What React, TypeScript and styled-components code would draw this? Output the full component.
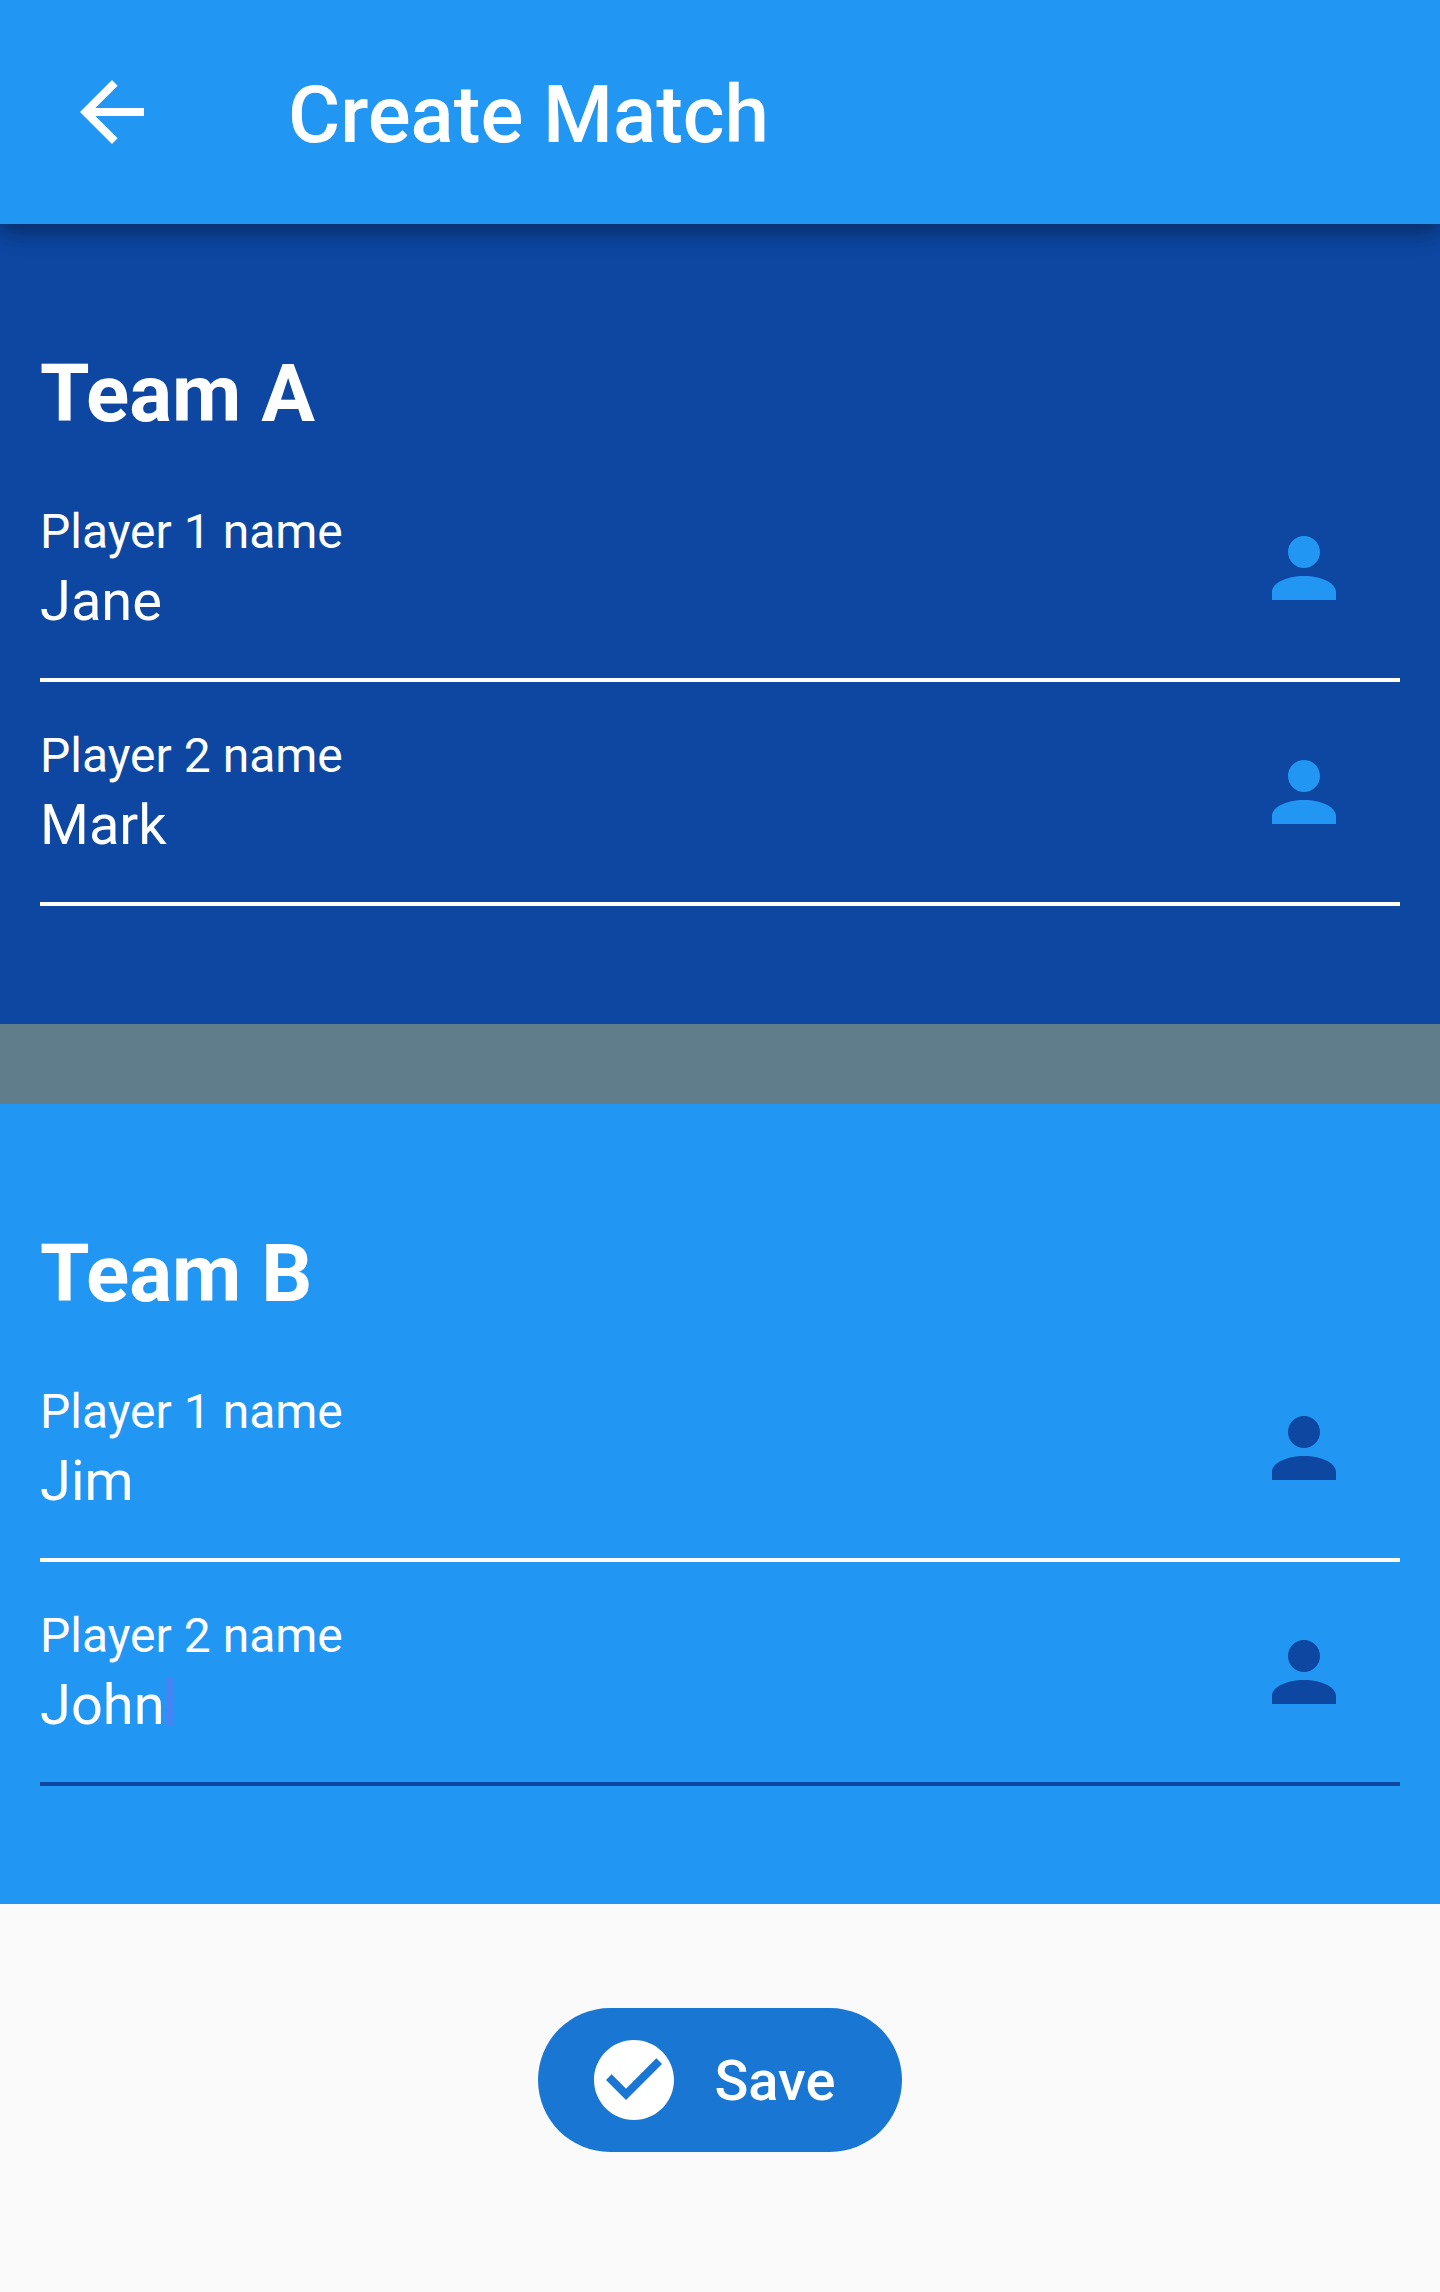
import React, { useState } from 'react';
import styled, { createGlobalStyle } from 'styled-components';

const blue = '#2196f3';
const navy = '#0d47a1';

const GlobalStyle = createGlobalStyle`
  *, *::before, *::after { box-sizing: border-box; }
  body {
    margin: 0;
    background: #fafafa;
    font-family: Roboto, "Liberation Sans", sans-serif;
  }
`;

const Screen = styled.div`
  display: flex;
  flex-direction: column;
  min-height: 100vh;
`;

const AppBar = styled.header`
  position: relative;
  z-index: 1;
  display: flex;
  align-items: center;
  gap: 96px;
  min-height: 224px;
  padding: 0 32px;
  background: ${blue};
  color: #fff;
  box-shadow:
    0 8px 16px -2px rgba(0, 0, 0, 0.2),
    0 12px 20px 0 rgba(0, 0, 0, 0.12),
    0 4px 32px 0 rgba(0, 0, 0, 0.1);
`;

const BackButton = styled.button`
  display: flex;
  margin: 0;
  padding: 0 32px;
  border: 0;
  background: none;
  color: inherit;
  cursor: pointer;
`;

const Title = styled.h1`
  margin: 0;
  padding-top: 6px;
  font-size: 80px;
  font-weight: 500;
  line-height: 96px;
`;

const Icon = styled.svg`
  display: block;
  flex: none;
  width: 96px;
  height: 96px;
  fill: currentColor;
`;

const Form = styled.form`
  display: flex;
  flex-direction: column;
`;

const Team = styled.section<{ $background: string; $accent: string }>`
  --accent: ${(p) => p.$accent};
  padding: 122px 40px 118px;
  background: ${(p) => p.$background};
  color: #fff;
`;

const TeamName = styled.h2`
  margin: 0 0 16px;
  font-size: 80px;
  font-weight: 700;
  line-height: 96px;
`;

const Field = styled.div<{ $active: boolean }>`
  display: flex;
  align-items: center;
  padding-right: 48px;
  border-bottom: 4px solid ${(p) => (p.$active ? 'var(--accent)' : '#fff')};

  svg { color: var(--accent); }
`;

const FieldText = styled.div`
  flex: 1;
  min-width: 0;
  padding: 46px 0 44px;
`;

const Label = styled.label`
  display: block;
  margin-bottom: 8px;
  font-size: 48px;
  line-height: 56px;
`;

const Entry = styled.div`
  display: flex;
  height: 66px;
`;

const Input = styled.input<{ $fit: boolean }>`
  ${(p) => (p.$fit ? 'field-sizing: content;' : 'width: 100%;')}
  height: 66px;
  margin: 0;
  padding: 0;
  border: 0;
  outline: 0;
  background: none;
  color: inherit;
  caret-color: transparent;
  font: inherit;
  font-size: 56px;
  line-height: 66px;
`;

const Caret = styled.span`
  width: 8px;
  height: 48px;
  margin-top: 6px;
  background: #4285f4;
`;

const Divider = styled.div`
  height: 80px;
  background: #607d8b;
`;

const Actions = styled.div`
  display: flex;
  justify-content: center;
  padding: 104px 40px;
`;

const SaveButton = styled.button`
  display: flex;
  align-items: center;
  gap: 32px;
  margin: 0;
  padding: 24px 66px 24px 48px;
  border: 0;
  border-radius: 72px;
  background: #1976d2;
  color: #fff;
  font: inherit;
  font-size: 56px;
  font-weight: 500;
  line-height: 68px;
  cursor: pointer;
`;

const ArrowBackIcon = () => (
  <Icon viewBox="0 0 24 24" aria-hidden="true">
    <path d="M20 11H7.83l5.59-5.59L12 4l-8 8 8 8 1.41-1.41L7.83 13H20v-2z" />
  </Icon>
);

const PersonIcon = () => (
  <Icon viewBox="0 0 24 24" aria-hidden="true">
    <path d="M12 12c2.21 0 4-1.79 4-4s-1.79-4-4-4-4 1.79-4 4 1.79 4 4 4zm0 2c-4.42 0-8 1.79-8 4v2h16v-2c0-2.21-3.58-4-8-4z" />
  </Icon>
);

const CheckCircleIcon = () => (
  <Icon viewBox="0 0 24 24" aria-hidden="true">
    <path d="M12 2C6.48 2 2 6.48 2 12s4.48 10 10 10 10-4.48 10-10S17.52 2 12 2zm-2 15l-5-5 1.41-1.41L10 14.17l7.59-7.59L19 8l-9 9z" />
  </Icon>
);

const SaveLabel = styled.span`
  padding-top: 2px;
`;

type PlayerFieldProps = { id: string; label: string; initial: string; active?: boolean };

function PlayerField({ id, label, initial, active = false }: PlayerFieldProps) {
  const [name, setName] = useState(initial);
  return (
    <Field $active={active}>
      <FieldText>
        <Label htmlFor={id}>{label}</Label>
        <Entry>
          <Input
            id={id}
            type="text"
            autoComplete="off"
            spellCheck={false}
            $fit={active}
            value={name}
            onChange={(e) => setName(e.target.value)}
          />
          {active && <Caret />}
        </Entry>
      </FieldText>
      <PersonIcon />
    </Field>
  );
}

export default function App() {
  return (
    <Screen>
      <GlobalStyle />
      <AppBar>
        <BackButton type="button" aria-label="Back">
          <ArrowBackIcon />
        </BackButton>
        <Title>Create Match</Title>
      </AppBar>
      <Form onSubmit={(e) => e.preventDefault()}>
        <Team $background={navy} $accent={blue}>
          <TeamName>Team A</TeamName>
          <PlayerField id="a1" label="Player 1 name" initial="Jane" />
          <PlayerField id="a2" label="Player 2 name" initial="Mark" />
        </Team>
        <Divider />
        <Team $background={blue} $accent={navy}>
          <TeamName>Team B</TeamName>
          <PlayerField id="b1" label="Player 1 name" initial="Jim" />
          <PlayerField id="b2" label="Player 2 name" initial="John" active />
        </Team>
        <Actions>
          <SaveButton type="submit">
            <CheckCircleIcon />
            <SaveLabel>Save</SaveLabel>
          </SaveButton>
        </Actions>
      </Form>
    </Screen>
  );
}
